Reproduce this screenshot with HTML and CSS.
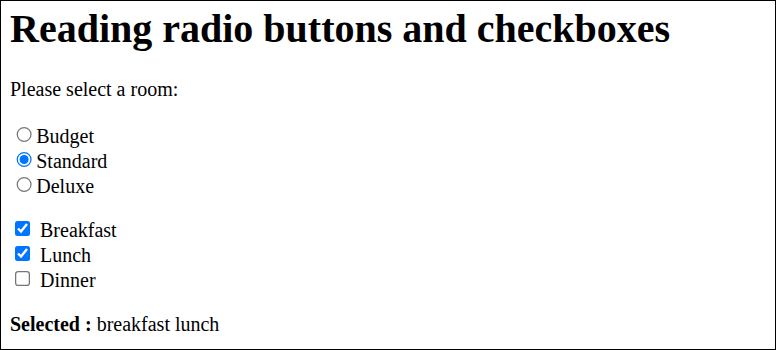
FILE: index.html
```html
<!DOCTYPE html>
<html lang="en">
	<head>
		<meta charset="UTF-8" />
		<meta name="viewport" content="width=device-width, initial-scale=1.0" />
		<title>Radio and checkboxes</title>
		<link rel="stylesheet" href="styles.css">
	</head>
	<body>
		<div class="frame">
			<div class="page">
				<h1 class="title">Reading radio buttons and checkboxes</h1>
				<p class="hint">Please select a room:</p>
				<div class="rooms">
					<input type="radio" name="room" id="budget" /><label for="budget">Budget</label><br />
					<input type="radio" name="room" id="standard" checked /><label for="standard">Standard</label><br />
					<input type="radio" name="room" id="deluxe" /><label for="deluxe">Deluxe</label>
				</div>
				<div class="meals">
					<input type="checkbox" id="breakfast" checked /> <label for="breakfast">Breakfast</label><br />
					<input type="checkbox" id="lunch" checked /> <label for="lunch">Lunch</label><br />
					<input type="checkbox" id="dinner" /> <label for="dinner">Dinner</label>
				</div>
				<p class="result"><b>Selected :</b> <span id="selected">breakfast lunch</span></p>
			</div>
		</div>
		<script>
			// update the selected meals text
			const boxes = document.querySelectorAll('.meals input');
			boxes.forEach(function (box) {
				box.addEventListener('change', function () {
					const picked = [];
					boxes.forEach((b) => { if (b.checked) picked.push(b.id); });
					document.getElementById('selected').textContent = picked.join(' ');
				});
			});
		</script>
	</body>
</html>
```
FILE: styles.css
```css
body {
	margin: 0;
	font-family: "Liberation Serif", "Times New Roman", serif;
	color: #000;
	background-color: #fff;
}
.frame {
	box-sizing: border-box;
	height: 350px;
	border: 1px solid #000;
	overflow: hidden;
}
/* screenshot was taken at 125% */
.page {
	zoom: 1.25;
	padding: 0 7.2px;
}
.title {
	font-size: 32px;
	margin: 3px 0 21px;
}
.rooms {
	padding-top: 1.6px;
	margin-bottom: 15.2px;
}
.result {
	margin-top: 16.8px;
}
```
